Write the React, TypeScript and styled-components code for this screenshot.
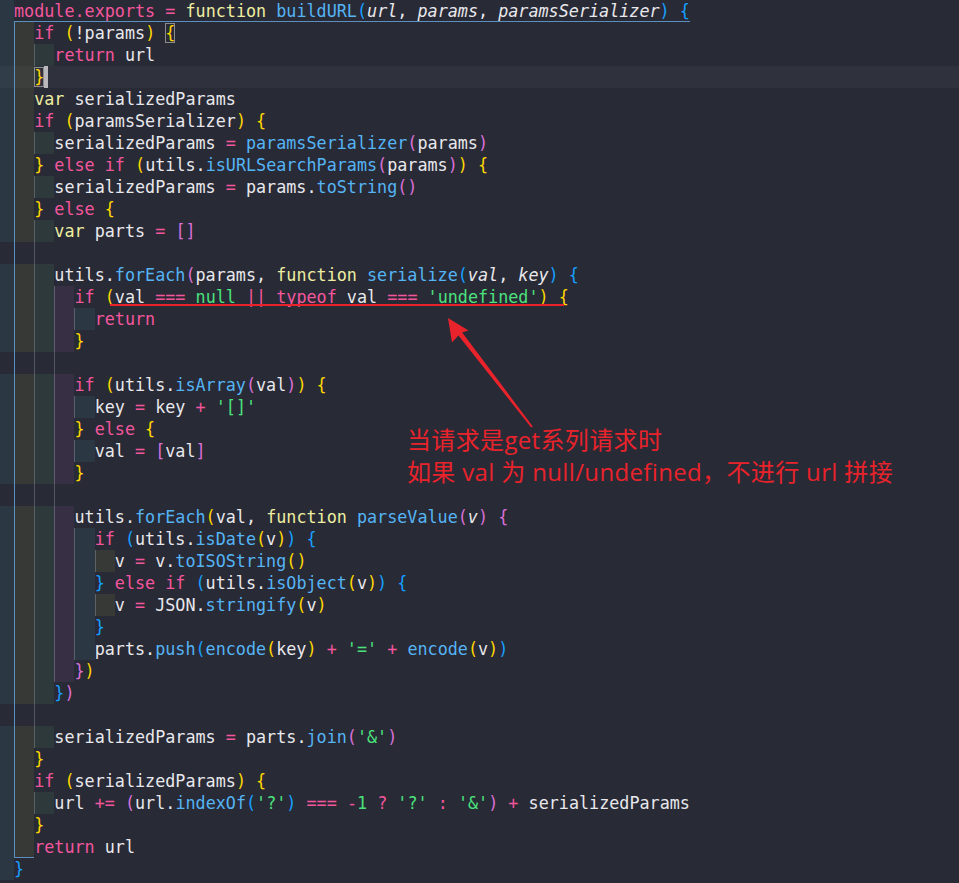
import React from 'react';
import styled, { createGlobalStyle } from 'styled-components';

const SOURCE = `module.exports = function buildURL(url, params, paramsSerializer) {
  if (!params) {
    return url
  }
  var serializedParams
  if (paramsSerializer) {
    serializedParams = paramsSerializer(params)
  } else if (utils.isURLSearchParams(params)) {
    serializedParams = params.toString()
  } else {
    var parts = []

    utils.forEach(params, function serialize(val, key) {
      if (val === null || typeof val === 'undefined') {
        return
      }

      if (utils.isArray(val)) {
        key = key + '[]'
      } else {
        val = [val]
      }

      utils.forEach(val, function parseValue(v) {
        if (utils.isDate(v)) {
          v = v.toISOString()
        } else if (utils.isObject(v)) {
          v = JSON.stringify(v)
        }
        parts.push(encode(key) + '=' + encode(v))
      })
    })

    serializedParams = parts.join('&')
  }
  if (serializedParams) {
    url += (url.indexOf('?') === -1 ? '?' : '&') + serializedParams
  }
  return url
}`;

const COL = {
  bg: '#282a36',
  text: '#e8e8ec',
  kw: '#f4569d',
  decl: '#efeea0',
  fn: '#55b4f4',
  str: '#4be27c',
  red: '#e8232b',
  guide: 'rgba(200,200,215,0.28)',
  guideActive: '#5b8fc0',
};

const BRACKETS = ['#179fff', '#ffd700', '#da70d6'];
const RAINBOW = [
  'rgba(255,255,64,0.07)',
  'rgba(127,255,127,0.07)',
  'rgba(255,127,255,0.07)',
  'rgba(79,236,236,0.07)',
];

type Kind = 'plain' | 'kw' | 'decl' | 'fn' | 'str' | 'op' | 'id' | 'param' | 'br';
type Token = { s: string; k: Kind; color?: string };

const KEYWORDS = new Set(['if', 'else', 'return', 'typeof', 'module', 'exports']);

function tokenize(src: string): { indent: number; tokens: Token[] }[] {
  let depth = 0;
  let expectParams = false;
  let paramMode = false;
  return src.split('\n').map((line) => {
    const text = line.trimStart();
    const indent = line.length - text.length;
    const re = /'[^']*'|\d+|[A-Za-z_$][\w$]*|===|\+=|\|\||[=+\-?:!]|[()[\]{}]|[.,]|\s+/g;
    const tokens: Token[] = [];
    let m: RegExpExecArray | null;
    let prev = '';
    while ((m = re.exec(text))) {
      const s = m[0];
      const rest = text.slice(re.lastIndex);
      let k: Kind = 'id';
      let color: string | undefined;
      if (/^\s+$/.test(s)) k = 'plain';
      else if (s[0] === "'") k = 'str';
      else if (/^\d/.test(s)) k = 'str';
      else if (/^[A-Za-z_$]/.test(s)) {
        if (paramMode) k = 'param';
        else if (s === 'function') {
          k = 'decl';
          expectParams = true;
        } else if (s === 'var') k = 'decl';
        else if (s === 'null') k = 'str';
        else if (KEYWORDS.has(s)) k = 'kw';
        else if (rest.startsWith('(')) k = 'fn';
        else k = 'id';
      } else if ('([{'.includes(s)) {
        k = 'br';
        color = BRACKETS[depth % 3];
        depth++;
        if (s === '(' && expectParams && prev !== 'function') {
          paramMode = true;
          expectParams = false;
        }
      } else if (')]}'.includes(s)) {
        depth--;
        k = 'br';
        color = BRACKETS[depth % 3];
        if (s === ')' && paramMode) paramMode = false;
      } else if (s === '.') k = prev === 'module' ? 'kw' : 'id';
      else if (s === ',' || s === '!') k = 'id';
      else k = 'op';
      tokens.push({ s, k, color });
      if (k !== 'plain') prev = s;
    }
    return { indent, tokens };
  });
}

const LINES = tokenize(SOURCE);

// [level, fromLine, toLine] (1-based lines)
const GUIDES: [number, number, number][] = [
  [1, 3, 3],
  [1, 7, 7],
  [1, 9, 9],
  [1, 11, 34],
  [2, 14, 31],
  [3, 15, 15],
  [3, 19, 19],
  [3, 21, 21],
  [3, 25, 30],
  [4, 26, 26],
  [4, 28, 28],
  [1, 37, 37],
];

function guidesFor(lineNo: number): Map<number, string> {
  const map = new Map<number, string>();
  if (lineNo >= 2 && lineNo <= 39) map.set(0, COL.guideActive);
  GUIDES.forEach(([lvl, a, b]) => {
    if (lineNo >= a && lineNo <= b) map.set(lvl, COL.guide);
  });
  return map;
}

const GlobalStyle = createGlobalStyle`
  html, body {
    margin: 0;
    padding: 0;
    background: ${COL.bg};
  }
  #root {
    width: 959px;
    height: 883px;
  }
`;

const Screen = styled.div`
  position: relative;
  width: 959px;
  height: 883px;
  overflow: hidden;
  background: ${COL.bg};
`;

const Editor = styled.div`
  display: flex;
  flex-direction: column;
  font-family: 'DejaVu Sans Mono', 'Liberation Mono', monospace;
  font-size: 16.75px;
  color: ${COL.text};
`;

const Row = styled.div<{ $active?: boolean }>`
  display: flex;
  align-items: stretch;
  height: 22px;
  line-height: 22px;
  white-space: pre;
  background: ${(p) => (p.$active ? 'rgba(255,255,255,0.035)' : 'transparent')};
`;

const Strip = styled.span<{ $on: boolean }>`
  flex: 0 0 14px;
  background: ${(p) => (p.$on ? RAINBOW[3] : 'transparent')};
`;

const IndentCell = styled.span<{ $bg: string; $guide?: string; $corner?: boolean }>`
  flex: 0 0 2ch;
  background: ${(p) => p.$bg};
  box-shadow: ${(p) =>
    p.$guide ? (p.$corner ? `inset 1px -1px 0 ${p.$guide}` : `inset 1px 0 0 ${p.$guide}`) : 'none'};
`;

const CodeText = styled.span<{ $underline?: boolean }>`
  display: inline-block;
  height: 22px;
  box-shadow: ${(p) => (p.$underline ? `inset 0 -1px 0 ${COL.guideActive}` : 'none')};
`;

const KIND_COLOR: Record<Kind, string> = {
  plain: COL.text,
  kw: COL.kw,
  decl: COL.decl,
  fn: COL.fn,
  str: COL.str,
  op: COL.kw,
  id: COL.text,
  param: COL.text,
  br: COL.text,
};

const Tok = styled.span<{ $color: string; $italic?: boolean; $boxed?: boolean }>`
  color: ${(p) => p.$color};
  font-style: ${(p) => (p.$italic ? 'italic' : 'normal')};
  box-shadow: ${(p) => (p.$boxed ? 'inset 0 0 0 1px #8b8b8b' : 'none')};
`;

const Cursor = styled.span`
  display: inline-block;
  width: 4px;
  height: 22px;
  vertical-align: top;
  background: #b9b9bd;
`;

const Underline = styled.div`
  position: absolute;
  left: 110px;
  top: 304px;
  width: 454px;
  height: 2px;
  background: ${COL.red};
`;

const ArrowSvg = styled.svg`
  position: absolute;
  left: 0;
  top: 0;
  pointer-events: none;
`;

const Note = styled.div`
  position: absolute;
  left: 407px;
  top: 424px;
  font-family: 'Open Sans', 'Noto Sans CJK SC', sans-serif;
  font-size: 24px;
  line-height: 32px;
  letter-spacing: 0.35px;
  color: ${COL.red};
  white-space: nowrap;
`;

export default function App() {
  return (
    <>
      <GlobalStyle />
      <Screen>
        <Editor>
          {LINES.map((line, i) => {
            const lineNo = i + 1;
            const empty = line.tokens.length === 0;
            const levels = line.indent / 2;
            const guides = guidesFor(lineNo);
            const maxGuide = guides.size ? Math.max(...Array.from(guides.keys())) + 1 : 0;
            const cells = Math.max(levels, maxGuide);
            return (
              <Row key={i} $active={lineNo === 4}>
                <Strip $on={!empty} />
                {Array.from({ length: cells }).map((_, k) => (
                  <IndentCell
                    key={k}
                    $bg={k < levels ? RAINBOW[k % 4] : 'transparent'}
                    $guide={guides.get(k)}
                    $corner={lineNo === 39 && k === 0}
                  />
                ))}
                <CodeText $underline={lineNo === 1}>
                  {line.tokens.map((t, j) => (
                    <Tok
                      key={j}
                      $color={t.color ?? KIND_COLOR[t.k]}
                      $italic={t.k === 'param'}
                      $boxed={(lineNo === 2 && t.s === '{') || (lineNo === 4 && t.s === '}')}
                    >
                      {t.s}
                    </Tok>
                  ))}
                  {lineNo === 4 && <Cursor />}
                </CodeText>
              </Row>
            );
          })}
        </Editor>
        <Underline />
        <ArrowSvg width={959} height={883} viewBox="0 0 959 883">
          <polygon
            points="448,318 468.5,330.5 462.2,332.6 532.8,426.4 531.2,427.6 458.4,335.6 452,342.5"
            fill={COL.red}
          />
        </ArrowSvg>
        <Note>
          当请求是get系列请求时
          <br />
          如果 val 为 null/undefined，不进行 url 拼接
        </Note>
      </Screen>
    </>
  );
}
